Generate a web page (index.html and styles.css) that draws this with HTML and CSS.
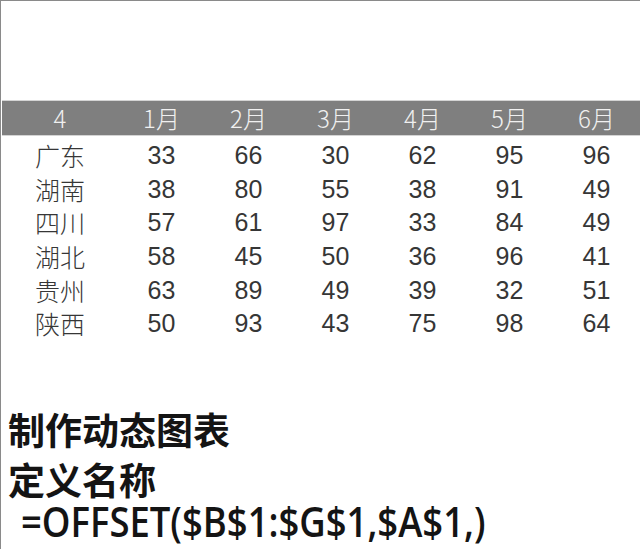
FILE: index.html
```html
<!DOCTYPE html>
<html lang="zh-CN">
<head>
<meta charset="utf-8">
<title>动态图表</title>
<link rel="stylesheet" href="styles.css">
</head>
<body>
<div class="sheet">
  <div class="table">
    <div class="row head">
      <div class="cell first">4</div>
      <div class="cell">1月</div>
      <div class="cell">2月</div>
      <div class="cell">3月</div>
      <div class="cell">4月</div>
      <div class="cell">5月</div>
      <div class="cell">6月</div>
    </div>
    <div class="body">
      <div class="row"><div class="cell first">广东</div><div class="cell">33</div><div class="cell">66</div><div class="cell">30</div><div class="cell">62</div><div class="cell">95</div><div class="cell">96</div></div>
      <div class="row"><div class="cell first">湖南</div><div class="cell">38</div><div class="cell">80</div><div class="cell">55</div><div class="cell">38</div><div class="cell">91</div><div class="cell">49</div></div>
      <div class="row"><div class="cell first">四川</div><div class="cell">57</div><div class="cell">61</div><div class="cell">97</div><div class="cell">33</div><div class="cell">84</div><div class="cell">49</div></div>
      <div class="row"><div class="cell first">湖北</div><div class="cell">58</div><div class="cell">45</div><div class="cell">50</div><div class="cell">36</div><div class="cell">96</div><div class="cell">41</div></div>
      <div class="row"><div class="cell first">贵州</div><div class="cell">63</div><div class="cell">89</div><div class="cell">49</div><div class="cell">39</div><div class="cell">32</div><div class="cell">51</div></div>
      <div class="row"><div class="cell first">陕西</div><div class="cell">50</div><div class="cell">93</div><div class="cell">43</div><div class="cell">75</div><div class="cell">98</div><div class="cell">64</div></div>
    </div>
  </div>
  <div class="notes">
    <div class="note">制作动态图表</div>
    <div class="note">定义名称</div>
    <div class="formula"><span class="formula-text">=OFFSET($B$1:$G$1,$A$1,)</span></div>
  </div>
</div>
</body>
</html>
```

FILE: styles.css
```css
html, body {
  margin: 0;
  padding: 0;
  background: #ffffff;
}

.sheet {
  width: 640px;
  height: 549px;
  box-sizing: border-box;
  border-top: 1px solid #8a8a8a;
  border-left: 1px solid #8a8a8a;
  display: flex;
  flex-direction: column;
  overflow: hidden;
}

.table {
  margin-top: 99px;
  padding-left: 1px;
  display: flex;
  flex-direction: column;
}

.row {
  display: grid;
  grid-template-columns: 116px repeat(6, 87px);
  height: 33.7px;
  align-items: center;
}

.cell {
  text-align: center;
  font-family: "Liberation Sans", "Noto Sans CJK SC", sans-serif;
  font-size: 25px;
  color: #363636;
  line-height: 34px;
}

.cell.first {
  font-family: "Noto Sans CJK SC", sans-serif;
  font-weight: 300;
  font-size: 25px;
}

.head {
  height: 34px;
  background: #7f7f7f;
  border-top: 1px solid #d4d4d4;
  border-bottom: 1px solid #d4d4d4;
}

.head .cell {
  font-family: "Noto Sans CJK SC", sans-serif;
  font-weight: 300;
  font-size: 24px;
  color: #f0f0f0;
}

.body {
  padding-top: 2px;
}

.notes {
  margin-top: 64px;
  padding-left: 7px;
  display: flex;
  flex-direction: column;
}

.note {
  font-family: "Noto Sans CJK SC", sans-serif;
  font-weight: 700;
  font-size: 37px;
  line-height: 50px;
  color: #141414;
}

.formula {
  line-height: 34px;
  white-space: nowrap;
}

.formula-text {
  display: inline-block;
  margin-left: 13px;
  font-family: "Open Sans", sans-serif;
  font-weight: 600;
  font-size: 42px;
  color: #141414;
  transform: scaleX(0.868);
  transform-origin: left center;
}
```
